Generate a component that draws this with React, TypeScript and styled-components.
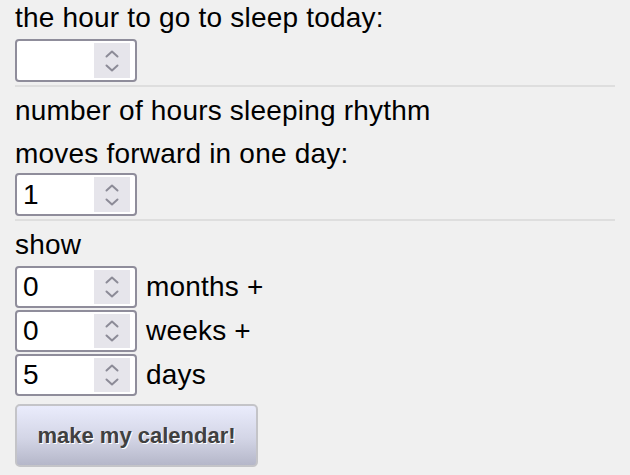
import React from "react";
import styled, { createGlobalStyle } from "styled-components";

const Global = createGlobalStyle`
  html, body { margin: 0; padding: 0; background: #f0f0f0; }
  body { font-family: "Liberation Sans", Arial, Helvetica, sans-serif; color: #000; }
`;

const Page = styled.div`
  width: 600px;
  padding: 0 15px;
  display: flex;
  flex-direction: column;
`;

const Label = styled.div<{ $mt: number }>`
  font-size: 28px;
  line-height: 32px;
  height: 32px;
  letter-spacing: 0.2px;
  margin-top: ${(p) => p.$mt}px;
  white-space: nowrap;
`;

const Rule = styled.div`
  height: 2px;
  background: #dedede;
  margin-top: 3px;
`;

const Row = styled.div<{ $mt: number }>`
  display: flex;
  align-items: center;
  gap: 9px;
  margin-top: ${(p) => p.$mt}px;
`;

const Box = styled.div<{ $h: number }>`
  box-sizing: border-box;
  width: 122px;
  height: ${(p) => p.$h}px;
  border: 2px solid #8f8d9b;
  border-radius: 4px;
  background: #fff;
  display: flex;
  align-items: center;
  padding: 2px 5px 2px 6px;
`;

const Value = styled.div`
  flex: 1;
  font-size: 28px;
  line-height: 32px;
`;

const Spinner = styled.div<{ $h: number }>`
  width: 36px;
  height: ${(p) => p.$h - 8}px;
  background: #e6e5eb;
  display: flex;
  align-items: center;
  justify-content: center;
`;

const Unit = styled.span`
  font-size: 28px;
  line-height: 32px;
  letter-spacing: 0.2px;
`;

const Button = styled.button`
  margin-top: 8px;
  box-sizing: border-box;
  width: 243px;
  height: 63px;
  border: 2px solid #c4c4c8;
  border-radius: 5px;
  background: linear-gradient(to bottom, #eaecfc 0%, #d3d5e6 55%, #b5b7c9 100%);
  font-family: "Liberation Sans", Arial, Helvetica, sans-serif;
  font-weight: bold;
  font-size: 22px;
  color: #404040;
  text-shadow: 1px 1px 0 #fff;
  padding: 0;
  cursor: pointer;
`;

const Chevrons = () => (
  <svg width="16" height="26" viewBox="0 0 16 26" fill="none">
    <path d="M2.5 8.5 L8 3.5 L13.5 8.5" stroke="#8c8b97" strokeWidth="2" strokeLinecap="round" strokeLinejoin="round" />
    <path d="M2.5 17.5 L8 22.5 L13.5 17.5" stroke="#8c8b97" strokeWidth="2" strokeLinecap="round" strokeLinejoin="round" />
  </svg>
);

const NumberBox = ({ value, h }: { value: string; h: number }) => (
  <Box $h={h}>
    <Value>{value}</Value>
    <Spinner $h={h}>
      <Chevrons />
    </Spinner>
  </Box>
);

export default function App() {
  return (
    <>
      <Global />
      <Page>
        <Label $mt={2}>the hour to go to sleep today:</Label>
        <Row $mt={5}>
          <NumberBox value="" h={43} />
        </Row>
        <Rule />
        <Label $mt={8}>number of hours sleeping rhythm</Label>
        <Label $mt={11}>moves forward in one day:</Label>
        <Row $mt={3}>
          <NumberBox value="1" h={43} />
        </Row>
        <Rule />
        <Label $mt={8}>show</Label>
        <Row $mt={5}>
          <NumberBox value="0" h={42} />
          <Unit>months +</Unit>
        </Row>
        <Row $mt={2}>
          <NumberBox value="0" h={42} />
          <Unit>weeks +</Unit>
        </Row>
        <Row $mt={2}>
          <NumberBox value="5" h={42} />
          <Unit>days</Unit>
        </Row>
        <Button>make my calendar!</Button>
      </Page>
    </>
  );
}
